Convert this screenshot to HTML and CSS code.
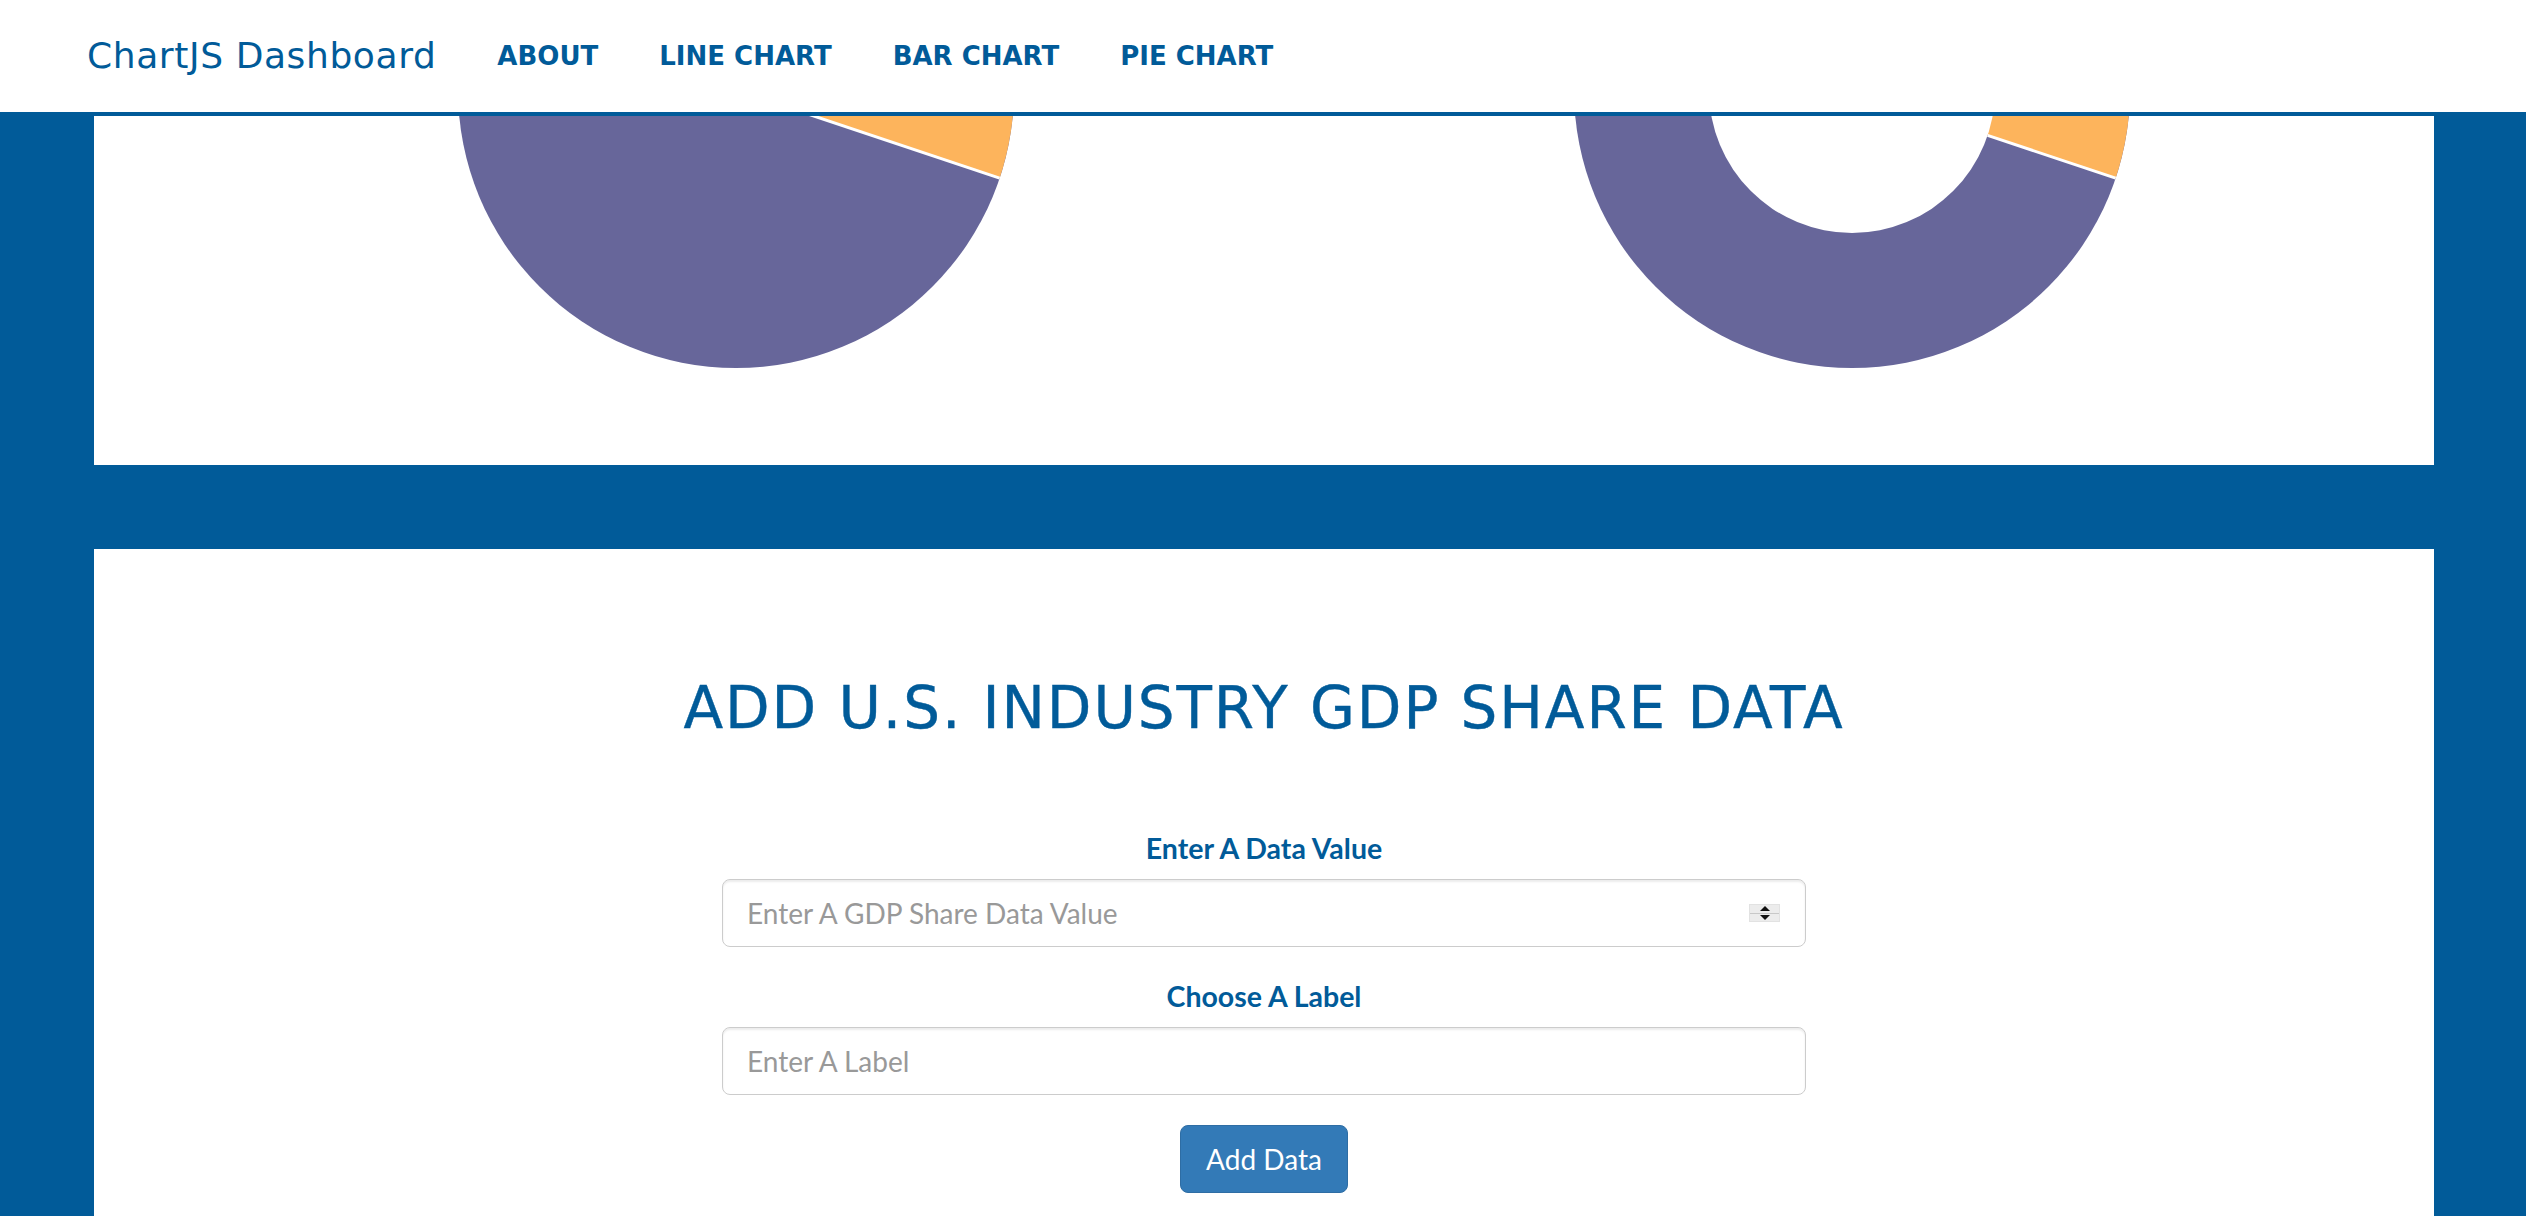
FILE: index.html
```html
<!DOCTYPE html>
<html lang="en">
<head>
<meta charset="utf-8">
<title>ChartJS Dashboard</title>
<link rel="stylesheet" href="styles.css">
</head>
<body>
<header class="navbar">
  <a class="brand" href="#">ChartJS Dashboard</a>
  <nav class="nav-links">
    <a href="#">ABOUT</a>
    <a href="#">LINE CHART</a>
    <a href="#">BAR CHART</a>
    <a href="#">PIE CHART</a>
  </nav>
</header>
<main class="main">
  <section class="panel charts">
    <div class="chart-cell">
      <svg class="chart-svg" width="1170" height="349" viewBox="0 0 1170 349">
        <circle cx="642" cy="-26" r="278" fill="#67669a"/>
        <path d="M642,-26 L781,-266.8 A278,278 0 0,1 905.6,62.2 Z" fill="#fdb45c"/>
        <path d="M642,-26 L905.6,62.2" stroke="#ffffff" stroke-width="3"/>
      </svg>
    </div>
    <div class="chart-cell">
      <svg class="chart-svg" width="1170" height="349" viewBox="0 0 1170 349">
        <circle cx="588" cy="-26" r="278" fill="#67669a"/>
        <path d="M588,-26 L727,-266.8 A278,278 0 0,1 851.6,62.2 Z" fill="#fdb45c"/>
        <path d="M723.6,19.4 L851.6,62.2" stroke="#ffffff" stroke-width="3"/>
        <circle cx="588" cy="-26" r="143" fill="#ffffff"/>
      </svg>
    </div>
  </section>
  <section class="panel form-panel">
    <h2 class="form-title">ADD U.S. INDUSTRY GDP SHARE DATA</h2>
    <form class="data-form">
      <div class="form-group">
        <label class="form-label" for="value">Enter A Data Value</label>
        <div class="input-wrap">
          <input class="form-control" id="value" type="text" placeholder="Enter A GDP Share Data Value">
          <span class="spinner"><span class="spin-up"></span><span class="spin-down"></span></span>
        </div>
      </div>
      <div class="form-group">
        <label class="form-label" for="label">Choose A Label</label>
        <div class="input-wrap">
          <input class="form-control" id="label" type="text" placeholder="Enter A Label">
        </div>
      </div>
      <div class="actions">
        <button class="btn-primary" type="button">Add Data</button>
      </div>
    </form>
  </section>
</main>
</body>
</html>
```
FILE: styles.css
```css
* { box-sizing: border-box; }
html, body {
  margin: 0;
  padding: 0;
  height: 1216px;
  overflow: hidden;
}
body {
  font-family: Lato, "Liberation Sans", sans-serif;
  background: #015b99;
  color: #015b99;
}
.navbar {
  display: flex;
  align-items: flex-start;
  height: 116px;
  background: #ffffff;
  border-bottom: 4px solid #015b99;
  padding-left: 87px;
}
.brand {
  font-family: "DejaVu Sans", sans-serif;
  font-size: 36px;
  line-height: 112px;
  letter-spacing: 0.6px;
  color: #015b99;
  text-decoration: none;
  margin-right: 61px;
}
.nav-links {
  display: flex;
  gap: 61px;
}
.nav-links a {
  font-family: "DejaVu Sans", sans-serif;
  font-weight: bold;
  font-size: 26px;
  line-height: 112px;
  color: #015b99;
  text-decoration: none;
}
.main {
  padding: 0 92px 0 94px;
}
.panel {
  background: #ffffff;
}
.charts {
  display: flex;
  height: 349px;
  margin-bottom: 84px;
}
.chart-cell {
  width: 1170px;
  height: 349px;
}
.chart-svg {
  display: block;
}
.form-panel {
  height: 667px;
  padding-top: 124px;
}
.form-title {
  margin: 0;
  text-align: center;
  font-family: "DejaVu Sans", sans-serif;
  font-weight: normal;
  font-size: 58px;
  line-height: 70px;
  letter-spacing: 1.9px;
  color: #015b99;
  -webkit-text-stroke: 0.4px #015b99;
}
.data-form {
  margin: 85px auto 0;
  width: 1084px;
}
.form-group {
  margin-bottom: 29px;
}
.form-label {
  display: block;
  text-align: center;
  font-weight: bold;
  font-size: 28.5px;
  line-height: 40px;
  margin-bottom: 11px;
  color: #015b99;
}
.input-wrap {
  position: relative;
}
.form-control {
  display: block;
  width: 1084px;
  height: 68px;
  padding: 0 24px;
  font-family: Lato, sans-serif;
  font-size: 28px;
  color: #555;
  background: #fff;
  border: 1px solid #cccccc;
  border-radius: 8px;
  box-shadow: inset 0 2px 2px rgba(0, 0, 0, 0.075);
  outline: none;
}
.form-control::placeholder {
  color: #999999;
}
.spinner {
  position: absolute;
  right: 26px;
  top: 25px;
  width: 31px;
  height: 18px;
  display: flex;
  flex-direction: column;
  background: #ececec;
  border: 1px solid #e2e2e2;
}
.spin-up, .spin-down {
  flex: 1;
  display: flex;
  align-items: center;
  justify-content: center;
}
.spin-up {
  border-bottom: 1px solid #c8c8c8;
}
.spin-up::before {
  content: "";
  border-left: 5px solid transparent;
  border-right: 5px solid transparent;
  border-bottom: 5px solid #111;
}
.spin-down::before {
  content: "";
  border-left: 5px solid transparent;
  border-right: 5px solid transparent;
  border-top: 5px solid #111;
}
.actions {
  display: flex;
  justify-content: center;
  padding-top: 1px;
}
.btn-primary {
  width: 168px;
  height: 68px;
  font-family: Lato, sans-serif;
  font-size: 28px;
  color: #ffffff;
  background: #337ab7;
  border: 1px solid #2e6da4;
  border-radius: 8px;
  padding: 0;
}
```
